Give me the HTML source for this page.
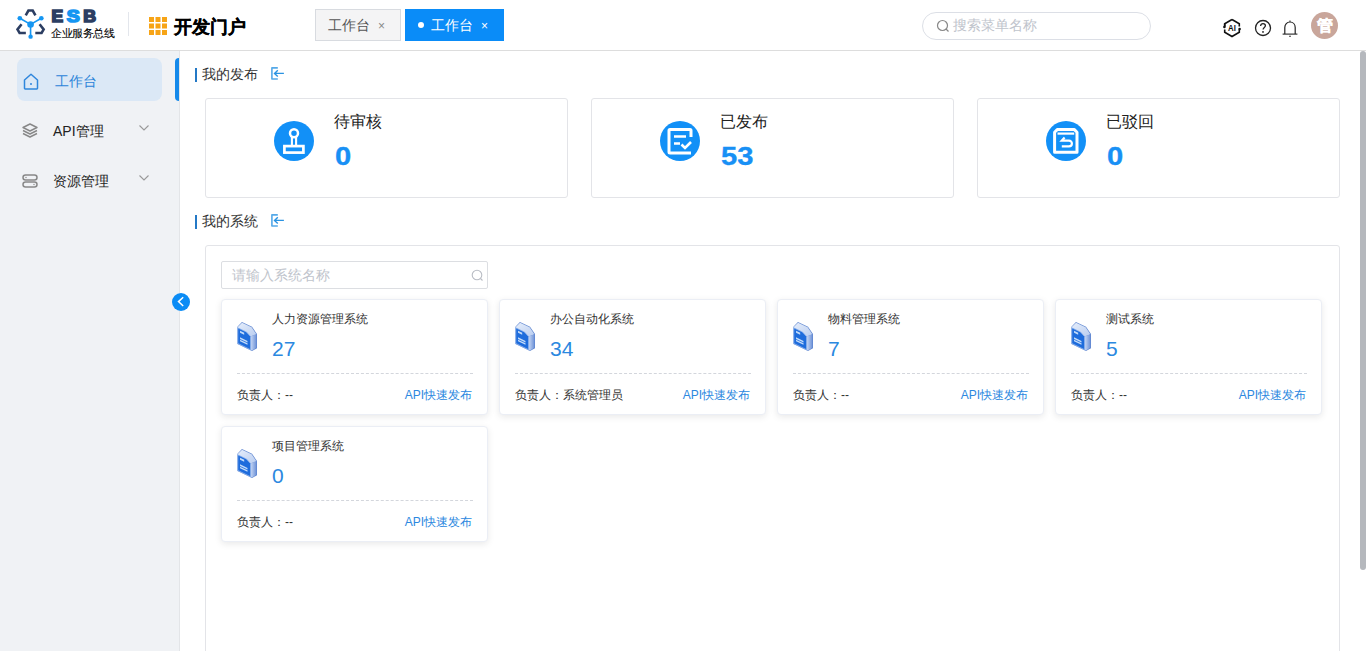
<!DOCTYPE html>
<html><head><meta charset="utf-8">
<style>
*{box-sizing:border-box;margin:0;padding:0}
html,body{width:1366px;height:651px;overflow:hidden;background:#fff;font-family:"Liberation Sans",sans-serif;color:#333}
.abs{position:absolute}
#hdr{position:absolute;left:0;top:0;width:1366px;height:51px;background:#fff;border-bottom:1px solid #dddddd}
#side{position:absolute;left:0;top:51px;width:180px;height:600px;background:#f0f2f5;border-right:1px solid #e3e5e8}
.t{position:absolute;white-space:nowrap;line-height:1}
.card{position:absolute;border:1px solid #e3e4e8;border-radius:3px;background:#fff}
.scard{position:absolute;width:267px;height:116px;background:#fff;border-radius:4px;border:1px solid #ebeef5;box-shadow:0 2px 7px rgba(0,0,0,.09)}
.scard .nm{position:absolute;left:50px;top:13px;font-size:12px;color:#333;white-space:nowrap;line-height:1}
.scard .num{position:absolute;left:50px;top:38px;font-size:21px;color:#2b88e0;line-height:1}
.scard .dash{position:absolute;left:15px;right:14px;top:73px;border-top:1px dashed #d3d6dc}
.scard .own{position:absolute;left:15px;top:89px;font-size:12px;color:#333;white-space:nowrap;line-height:1}
.scard .api{position:absolute;right:15px;top:89px;font-size:12px;color:#2b88e0;white-space:nowrap;line-height:1}
.scard svg{position:absolute;left:10px;top:18px}
</style></head><body>
<div id="hdr">
  <!-- logo icon -->
  <svg class="abs" style="left:10px;top:5px" width="50" height="40" viewBox="0 0 814 651">
    <g fill="none" stroke="#2c3e62" stroke-width="42" stroke-linejoin="miter">
      <path d="M256,168 L300,90 L370,90 L414,168"/>
      <path d="M188,312 L122,398 L156,455 L258,455"/>
      <path d="M482,312 L548,398 L514,455 L412,455"/>
    </g>
    <g stroke="#1596f2" stroke-width="26" fill="none"><path d="M160,215 L335,315 L510,215 M335,315 L335,515"/></g>
    <g fill="#1596f2"><circle cx="160" cy="215" r="38"/><circle cx="510" cy="215" r="38"/><circle cx="335" cy="318" r="54"/><circle cx="335" cy="515" r="36"/></g>
  </svg>
  <svg class="abs" style="left:45px;top:5px" width="80" height="22" viewBox="0 0 80 22">
    <g font-family="Liberation Sans" font-weight="bold" font-size="16" stroke-width="1.6">
      <text x="6.6" y="16.9" fill="#2c3e62" stroke="#2c3e62" textLength="11.6" lengthAdjust="spacingAndGlyphs">E</text>
      <text x="21.8" y="16.9" fill="#1596f2" stroke="#1596f2" textLength="13" lengthAdjust="spacingAndGlyphs">S</text>
      <text x="38.2" y="16.9" fill="#2c3e62" stroke="#2c3e62" textLength="12.8" lengthAdjust="spacingAndGlyphs">B</text>
    </g>
  </svg>
  <div class="t" style="left:51px;top:28px;font-size:10.5px;letter-spacing:-0.4px;color:#000;-webkit-text-stroke:0.1px #000">企业服务总线</div>
  <div class="abs" style="left:128px;top:12px;width:1px;height:24px;background:#e3e6ec"></div>
  <!-- grid icon -->
  <svg class="abs" style="left:149px;top:17px" width="18" height="18" viewBox="0 0 18 18">
    <g fill="#f7a416">
      <rect x="0" y="0" width="5" height="5"/><rect x="6.5" y="0" width="5" height="5"/><rect x="13" y="0" width="5" height="5"/>
      <rect x="0" y="6.5" width="5" height="5"/><rect x="6.5" y="6.5" width="5" height="5"/><rect x="13" y="6.5" width="5" height="5"/>
      <rect x="0" y="13" width="5" height="5"/><rect x="6.5" y="13" width="5" height="5"/><rect x="13" y="13" width="5" height="5"/>
    </g>
  </svg>
  <div class="t" style="left:174px;top:18px;font-size:18px;font-weight:bold;color:#000;-webkit-text-stroke:0.3px #000">开发门户</div>
  <!-- tabs -->
  <div class="abs" style="left:315px;top:9px;width:86px;height:32px;background:#f4f4f5;border:1px solid #d8dbe0"></div>
  <div class="t" style="left:328px;top:18px;font-size:14px;color:#555">工作台</div>
  <div class="t" style="left:378px;top:20px;font-size:12px;color:#888">×</div>
  <div class="abs" style="left:405px;top:9px;width:99px;height:32px;background:#0a8cf8"></div>
  <div class="abs" style="left:418px;top:22px;width:6px;height:6px;border-radius:50%;background:#fff"></div>
  <div class="t" style="left:431px;top:18px;font-size:14px;color:#fff">工作台</div>
  <div class="t" style="left:481px;top:20px;font-size:12px;color:#fff">×</div>
  <!-- search -->
  <div class="abs" style="left:922px;top:12px;width:229px;height:28px;border:1px solid #dcdfe6;border-radius:14px"></div>
  <svg class="abs" style="left:936px;top:19px" width="14" height="14" viewBox="0 0 14 14"><circle cx="6.5" cy="6.5" r="5" fill="none" stroke="#888" stroke-width="1.2"/><path d="M10,10 L12.5,12.5" stroke="#888" stroke-width="1.2"/></svg>
  <div class="t" style="left:953px;top:18px;font-size:14px;color:#c0c4cc">搜索菜单名称</div>
  <!-- right icons -->
  <svg class="abs" style="left:1222px;top:18px" width="20" height="20" viewBox="0 0 20 20">
    <path d="M10,1.5 L17.3,5.7 L17.3,8.5 M17.3,11.5 L17.3,14.3 L10,18.5 L2.7,14.3 L2.7,11.5 M2.7,8.5 L2.7,5.7 Z" fill="none" stroke="#111" stroke-width="1.6"/>
    <path d="M10,1.5 L2.7,5.7 L2.7,8.5" fill="none" stroke="#111" stroke-width="1.6"/>
    <circle cx="17.6" cy="11" r="1.3" fill="#111"/><circle cx="2.4" cy="9" r="1.3" fill="#111"/>
    <text x="6.1" y="13.1" font-family="Liberation Sans" font-weight="bold" font-size="9.8" fill="#111" textLength="7.8" lengthAdjust="spacingAndGlyphs">AI</text>
  </svg>
  <svg class="abs" style="left:1254px;top:19px" width="18" height="18" viewBox="0 0 18 18">
    <circle cx="9" cy="9" r="7.5" fill="none" stroke="#222" stroke-width="1.3"/>
    <path d="M6.6,7 C6.6,5.4 7.7,4.6 9,4.6 C10.4,4.6 11.4,5.5 11.4,6.8 C11.4,8.4 9.1,8.6 9.1,10.6" fill="none" stroke="#222" stroke-width="1.3"/>
    <circle cx="9" cy="12.9" r="0.9" fill="#222"/>
  </svg>
  <svg class="abs" style="left:1281px;top:19px" width="18" height="18" viewBox="0 0 18 18">
    <path d="M3.8,15 L3.8,8.6 C3.8,5.4 6,3 9,3 C12,3 14.2,5.4 14.2,8.6 L14.2,15" fill="none" stroke="#222" stroke-width="1.2"/>
    <path d="M1.6,15.1 L16.4,15.1" stroke="#222" stroke-width="1.1"/>
    <path d="M8.3,2.3 L9,1.7 L9.7,2.3" fill="none" stroke="#222" stroke-width="1"/>
    <circle cx="9" cy="17.3" r="0.75" fill="#222"/>
  </svg>
  <div class="abs" style="left:1311px;top:12px;width:27px;height:27px;border-radius:50%;background:#c9a69b"></div>
  <div class="t" style="left:1317px;top:18px;font-size:16px;font-weight:bold;color:#fff;-webkit-text-stroke:0.4px #fff">管</div>
</div>

<div id="side">
  <div class="abs" style="left:17px;top:7px;width:145px;height:43px;background:#dbe8f6;border-radius:8px"></div>
  <svg class="abs" style="left:23px;top:22px" width="16" height="17" viewBox="0 0 16 17">
    <path d="M1.5,7 L8,1.3 L14.5,7 L14.5,15.3 Q14.5,16 13.8,16 L2.2,16 Q1.5,16 1.5,15.3 Z" fill="none" stroke="#2f86dc" stroke-width="1.5" stroke-linejoin="round"/>
    <path d="M8,10 L8,12" stroke="#2f86dc" stroke-width="1.5"/>
  </svg>
  <div class="t" style="left:55px;top:23px;font-size:14px;color:#2b84d9">工作台</div>
  <svg class="abs" style="left:22px;top:72px" width="16" height="15" viewBox="0 0 16 15">
    <path d="M8,1 L15,4.5 L8,8 L1,4.5 Z" fill="none" stroke="#888" stroke-width="1.4" stroke-linejoin="round"/>
    <path d="M1,7.5 L8,11 L15,7.5 M1,10.5 L8,14 L15,10.5" fill="none" stroke="#888" stroke-width="1.4" stroke-linejoin="round"/>
  </svg>
  <div class="t" style="left:53px;top:73px;font-size:14px;color:#222">API管理</div>
  <svg class="abs" style="left:139px;top:74px" width="10" height="6" viewBox="0 0 10 6"><path d="M0.5,0.5 L5,5 L9.5,0.5" fill="none" stroke="#999" stroke-width="1.1"/></svg>
  <svg class="abs" style="left:22px;top:123px" width="16" height="14" viewBox="0 0 16 14">
    <rect x="1" y="1" width="14" height="5" rx="2.5" fill="none" stroke="#888" stroke-width="1.5"/>
    <rect x="1" y="8" width="14" height="5" rx="2.5" fill="none" stroke="#888" stroke-width="1.5"/>
    <circle cx="4" cy="3.5" r="0.7" fill="#888"/><circle cx="12" cy="10.5" r="0.7" fill="#888"/>
  </svg>
  <div class="t" style="left:53px;top:123px;font-size:14px;color:#222">资源管理</div>
  <svg class="abs" style="left:139px;top:124px" width="10" height="6" viewBox="0 0 10 6"><path d="M0.5,0.5 L5,5 L9.5,0.5" fill="none" stroke="#999" stroke-width="1.1"/></svg>
</div>
<!-- active indicator -->
<div class="abs" style="left:175px;top:58px;width:4px;height:43px;background:#1589ea;border-radius:4px 0 0 4px"></div>
<!-- collapse button -->
<svg class="abs" style="left:172px;top:293px" width="18" height="18" viewBox="0 0 18 18">
  <circle cx="9" cy="9" r="9" fill="#0b8cf5"/>
  <path d="M11.2,4.2 L6.5,8.6 L11.2,13" fill="none" stroke="#fff" stroke-width="1.5"/>
</svg>

<!-- main -->
<div class="abs" style="left:195px;top:68px;width:2px;height:14px;background:#2479c6"></div>
<div class="t" style="left:202px;top:67px;font-size:14px;color:#333">我的发布</div>
<svg class="abs" style="left:269px;top:66px" width="16" height="15" viewBox="0 0 16 15">
  <path d="M8.8,1.9 L2.9,1.9 L2.9,13 L8.8,13" fill="none" stroke="#55a9e8" stroke-width="1.6" stroke-linejoin="round"/>
  <path d="M14.9,7.4 L5.6,7.4 M8.8,4.3 L5.5,7.4 L8.8,10.6" fill="none" stroke="#2a93e2" stroke-width="1.4"/>
</svg>

<div class="card" style="left:205px;top:98px;width:363px;height:100px"></div>
<div class="card" style="left:591px;top:98px;width:363px;height:100px"></div>
<div class="card" style="left:977px;top:98px;width:363px;height:100px"></div>

<!-- stat icons -->
<svg class="abs" style="left:274px;top:121px" width="40" height="40" viewBox="0 0 40 40">
  <circle cx="20" cy="20" r="20" fill="#1290f7"/>
  <circle cx="20" cy="12.3" r="4" fill="none" stroke="#fff" stroke-width="2.5"/>
  <path d="M17.9,16 L17.9,24.5 M22.1,16 L22.1,24.5" stroke="#fff" stroke-width="2.1"/>
  <rect x="10.4" y="25.1" width="19" height="6.5" fill="none" stroke="#fff" stroke-width="2.7"/>
</svg>
<div class="t" style="left:334px;top:114px;font-size:16px;color:#222">待审核</div>
<div class="t" style="left:335px;top:143px;font-size:26px;font-weight:bold;color:#1890f5;-webkit-text-stroke:0.35px #1890f5;transform:scaleX(1.12);transform-origin:0 0">0</div>

<svg class="abs" style="left:660px;top:121px" width="40" height="40" viewBox="0 0 40 40">
  <circle cx="20" cy="20" r="20" fill="#1290f7"/>
  <path d="M31,16 L31,9.5 Q31,8.5 30,8.5 L10,8.5 Q9,8.5 9,9.5 L9,31 Q9,32 10,32 L31,32" fill="none" stroke="#fff" stroke-width="3"/>
  <path d="M14,15.5 L26,15.5 M14,22.5 L20,22.5" stroke="#fff" stroke-width="2.4"/>
  <path d="M21.5,23.5 L25,27 L31,21" fill="none" stroke="#fff" stroke-width="2.6"/>
</svg>
<div class="t" style="left:720px;top:114px;font-size:16px;color:#222">已发布</div>
<div class="t" style="left:721px;top:143px;font-size:26px;font-weight:bold;color:#1890f5;-webkit-text-stroke:0.35px #1890f5;transform:scaleX(1.12);transform-origin:0 0">53</div>

<svg class="abs" style="left:1046px;top:121px" width="40" height="40" viewBox="0 0 40 40">
  <circle cx="20" cy="20" r="20" fill="#1290f7"/>
  <path d="M8.6,11.2 L11.2,8.6 L28.4,8.6 L31,11.2 L31,31.3 L8.6,31.3 Z" fill="none" stroke="#fff" stroke-width="3" stroke-linejoin="round"/>
  <path d="M11.5,12.6 L28.2,12.6" stroke="#fff" stroke-width="2.2"/>
  <path d="M18.6,16.6 L15.8,19.6 L23,19.6 A2.9,2.9 0 0 1 23,25.4 L15.8,25.4" fill="none" stroke="#fff" stroke-width="2.2"/>
</svg>
<div class="t" style="left:1106px;top:114px;font-size:16px;color:#222">已驳回</div>
<div class="t" style="left:1107px;top:143px;font-size:26px;font-weight:bold;color:#1890f5;-webkit-text-stroke:0.35px #1890f5;transform:scaleX(1.12);transform-origin:0 0">0</div>

<div class="abs" style="left:195px;top:215px;width:2px;height:14px;background:#2479c6"></div>
<div class="t" style="left:202px;top:214px;font-size:14px;color:#333">我的系统</div>
<svg class="abs" style="left:269px;top:213px" width="16" height="15" viewBox="0 0 16 15">
  <path d="M8.8,1.9 L2.9,1.9 L2.9,13 L8.8,13" fill="none" stroke="#55a9e8" stroke-width="1.6" stroke-linejoin="round"/>
  <path d="M14.9,7.4 L5.6,7.4 M8.8,4.3 L5.5,7.4 L8.8,10.6" fill="none" stroke="#2a93e2" stroke-width="1.4"/>
</svg>

<div class="card" style="left:205px;top:245px;width:1135px;height:420px"></div>
<div class="abs" style="left:221px;top:261px;width:267px;height:28px;border:1px solid #dcdee2;border-radius:2px"></div>
<div class="t" style="left:232px;top:268px;font-size:14px;color:#c0c4cc">请输入系统名称</div>
<svg class="abs" style="left:471px;top:269px" width="13" height="13" viewBox="0 0 13 13"><circle cx="6" cy="6" r="4.8" fill="none" stroke="#b8bcc4" stroke-width="1.1"/><path d="M9.5,9.5 L11.5,11.5" stroke="#b8bcc4" stroke-width="1.1"/></svg>

<svg width="0" height="0" style="position:absolute">
  <defs>
    <symbol id="doc" viewBox="0 0 542 651">
      <defs>
        <linearGradient id="gtop" x1="0" y1="0" x2="1" y2="1"><stop offset="0" stop-color="#e6eefb"/><stop offset="1" stop-color="#b9cdf0"/></linearGradient>
        <linearGradient id="gside" x1="0" y1="0" x2="1" y2="0"><stop offset="0" stop-color="#c9d9f5"/><stop offset="1" stop-color="#6f93d8"/></linearGradient>
      </defs>
      <path d="M98,158 L180,74 L362,160 L452,288 L452,545 L362,598 L98,468 Z" fill="#5f86d0"/>
      <path d="M104,165 L182,84 L354,168 L440,292 L336,336 L260,252 L104,178 Z" fill="url(#gtop)"/>
      <path d="M336,336 L440,292 L440,540 L362,588 L336,572 Z" fill="url(#gside)"/>
      <path d="M104,178 L260,252 L336,336 L336,574 L104,460 Z" fill="#1e6cdc"/>
      <path d="M104,178 L260,252 L336,336 L336,574 L104,460 Z" fill="none" stroke="#9dbdf0" stroke-width="14"/>
      <path d="M145,230 L220,265 L220,302 L145,267 Z M145,350 L280,414 L280,442 L145,378 Z M145,392 L280,456 L280,484 L145,420 Z" fill="#c3dbf9"/>
    </symbol>
  </defs>
</svg>

<div class="scard" style="left:221px;top:299px"><svg width="30" height="36"><use href="#doc"/></svg><div class="nm">人力资源管理系统</div><div class="num">27</div><div class="dash"></div><div class="own">负责人：--</div><div class="api">API快速发布</div></div>
<div class="scard" style="left:499px;top:299px"><svg width="30" height="36"><use href="#doc"/></svg><div class="nm">办公自动化系统</div><div class="num">34</div><div class="dash"></div><div class="own">负责人：系统管理员</div><div class="api">API快速发布</div></div>
<div class="scard" style="left:777px;top:299px"><svg width="30" height="36"><use href="#doc"/></svg><div class="nm">物料管理系统</div><div class="num">7</div><div class="dash"></div><div class="own">负责人：--</div><div class="api">API快速发布</div></div>
<div class="scard" style="left:1055px;top:299px"><svg width="30" height="36"><use href="#doc"/></svg><div class="nm">测试系统</div><div class="num">5</div><div class="dash"></div><div class="own">负责人：--</div><div class="api">API快速发布</div></div>
<div class="scard" style="left:221px;top:426px"><svg width="30" height="36"><use href="#doc"/></svg><div class="nm">项目管理系统</div><div class="num">0</div><div class="dash"></div><div class="own">负责人：--</div><div class="api">API快速发布</div></div>

<!-- scrollbar -->
<div class="abs" style="left:1360px;top:51px;width:6px;height:519px;background:#b5b8bd;border-radius:3px"></div>
</body></html>
